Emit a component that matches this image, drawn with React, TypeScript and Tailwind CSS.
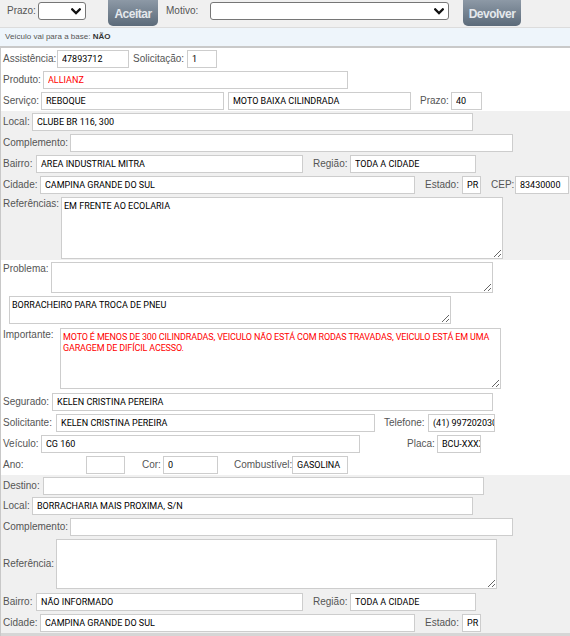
import type { ReactNode } from 'react';

interface BoxProps {
  value?: string;
  className?: string;
  red?: boolean;
}

function Label({ className = '', children }: { className?: string; children: ReactNode }) {
  return (
    <span
      className={`shrink-0 whitespace-nowrap font-['Liberation_Sans',sans-serif] text-[10px] leading-[12px] text-[#555] ${className}`}
    >
      {children}
    </span>
  );
}

function Field({ value = '', className = '', red = false }: BoxProps) {
  return (
    <input
      readOnly
      value={value}
      className={`h-[18px] shrink-0 border border-[#cdcdcd] bg-white pl-[4px] font-['Roboto',sans-serif] text-[9px] outline-none ${
        red ? 'text-[#ff0000]' : 'text-black'
      } ${className}`}
    />
  );
}

function Area({ value = '', className = '', red = false }: BoxProps) {
  return (
    <textarea
      readOnly
      wrap="off"
      value={value}
      className={`shrink-0 overflow-hidden border border-[#cdcdcd] bg-white px-[2px] pt-[3px] font-['Roboto',sans-serif] text-[9px] leading-[11px] outline-none ${
        red ? 'text-[#ff0000]' : 'text-black'
      } ${className}`}
    />
  );
}

// rows sit inside the 1px left border, so 2px padding puts labels at x=3
function Row({ className = '', children }: { className?: string; children: ReactNode }) {
  return <div className={`flex h-[18px] items-center pl-[2px] ${className}`}>{children}</div>;
}

function FakeSelect({ className = '' }: { className?: string }) {
  return (
    <div
      className={`flex h-[18px] shrink-0 items-center justify-end rounded-[3px] border border-[#767676] bg-white pr-[4px] ${className}`}
    >
      <svg width="10" height="7" viewBox="0 0 10 7" fill="none">
        <path d="M1.2 1.3 5 5.1 8.8 1.3" stroke="#111" strokeWidth="2.2" strokeLinecap="square" />
      </svg>
    </div>
  );
}

function ActionButton({ children, className = '' }: { children: ReactNode; className?: string }) {
  return (
    <button
      type="button"
      className={`h-[26px] shrink-0 rounded-b-[5px] bg-gradient-to-b from-[#8d99a6] to-[#5c6b7a] pt-[1px] text-center font-['Liberation_Sans_Narrow','Liberation_Sans',sans-serif] text-[12px] font-bold leading-[20px] tracking-[-0.5px] text-[#e4e8ec] ${className}`}
    >
      {children}
    </button>
  );
}

export default function App() {
  return (
    <div className="min-h-screen w-[570px] bg-white">
      {/* toolbar */}
      <div className="flex h-[28px] items-start border-b border-[#dcdcdc] bg-[#f0f0f0]">
        <Label className="ml-[7px] mt-[5px] w-[31px]">Prazo:</Label>
        <FakeSelect className="mt-[2px] w-[48px]" />
        <ActionButton className="ml-[22px] w-[50px]">Aceitar</ActionButton>
        <Label className="ml-[8px] mt-[5px] w-[44px]">Motivo:</Label>
        <FakeSelect className="mt-[2px] w-[239px]" />
        <ActionButton className="ml-[14px] w-[58px]">Devolver</ActionButton>
      </div>

      <div className="flex h-[20px] items-center border-b-2 border-[#c9c9c9] bg-[#eef5fb] pl-[5px] font-['Liberation_Sans',sans-serif] text-[8px] text-[#555]">
        Veículo vai para a base:&nbsp;<span className="font-bold text-[#333]">NÃO</span>
      </div>

      <div className="border-l border-[#c8c8c8]">
        {/* atendimento */}
        <div className="flex flex-col gap-[3px] bg-white pb-[1px] pt-[2px]">
          <Row>
            <Label className="w-[54px]">Assistência:</Label>
            <Field value="47893712" className="w-[72px]" />
            <Label className="ml-[4px] w-[54px]">Solicitação:</Label>
            <Field value="1" className="w-[30px]" />
          </Row>
          <Row>
            <Label className="w-[40px]">Produto:</Label>
            <Field value="ALLIANZ" red className="w-[305px]" />
          </Row>
          <Row>
            <Label className="w-[38px]">Serviço:</Label>
            <Field value="REBOQUE" className="w-[183px]" />
            <Field value="MOTO BAIXA CILINDRADA" className="ml-[4px] w-[183px]" />
            <Label className="ml-[9px] w-[31px]">Prazo:</Label>
            <Field value="40" className="w-[31px]" />
          </Row>
        </div>

        {/* origem */}
        <div className="flex flex-col gap-[3px] bg-[#f0f0f0] pb-[1px] pt-[2px]">
          <Row>
            <Label className="w-[29px]">Local:</Label>
            <Field value="CLUBE BR 116, 300" className="w-[441px]" />
          </Row>
          <Row>
            <Label className="w-[67px]">Complemento:</Label>
            <Field className="w-[443px]" />
          </Row>
          <Row>
            <Label className="w-[33px]">Bairro:</Label>
            <Field value="AREA INDUSTRIAL MITRA" className="w-[267px]" />
            <Label className="ml-[10px] w-[37px]">Região:</Label>
            <Field value="TODA A CIDADE" className="w-[126px]" />
          </Row>
          <Row>
            <Label className="w-[37px]">Cidade:</Label>
            <Field value="CAMPINA GRANDE DO SUL" className="w-[375px]" />
            <Label className="ml-[10px] w-[37px]">Estado:</Label>
            <Field value="PR" className="w-[19px] pl-[2px]" />
            <Label className="ml-[10px] w-[24px]">CEP:</Label>
            <Field value="83430000" className="w-[54px] pl-[3px]" />
          </Row>
          <div className="flex items-start pl-[2px]">
            <Label className="w-[58px] pt-[1px]">Referências:</Label>
            <Area value="EM FRENTE AO ECOLARIA" className="h-[62px] w-[442px]" />
          </div>
        </div>

        {/* ocorrência */}
        <div className="flex flex-col bg-white pb-[1px] pt-[2px]">
          <div className="flex items-start pl-[2px]">
            <Label className="w-[48px] pt-[1px]">Problema:</Label>
            <Area className="h-[31px] w-[442px]" />
          </div>
          <div className="mt-[3px] flex items-start pl-[8px]">
            <Area value="BORRACHEIRO PARA TROCA DE PNEU" className="h-[28px] w-[442px]" />
          </div>
          <div className="mt-[4px] flex items-start pl-[2px]">
            <Label className="w-[57px] pt-[1px]">Importante:</Label>
            <Area
              red
              value={
                'MOTO É MENOS DE 300 CILINDRADAS, VEICULO NÃO ESTÁ COM RODAS TRAVADAS, VEICULO ESTÁ EM UMA\nGARAGEM DE DIFÍCIL ACESSO.'
              }
              className="h-[61px] w-[441px] tracking-[-0.15px]"
            />
          </div>
          <Row className="mt-[4px]">
            <Label className="w-[49px]">Segurado:</Label>
            <Field value="KELEN CRISTINA PEREIRA" className="w-[441px]" />
          </Row>
          <Row className="mt-[3px]">
            <Label className="w-[53px]">Solicitante:</Label>
            <Field value="KELEN CRISTINA PEREIRA" className="w-[319px]" />
            <Label className="ml-[9px] w-[44px]">Telefone:</Label>
            <Field value="(41) 997202030" className="w-[67px] pl-[3px]" />
          </Row>
          <Row className="mt-[3px]">
            <Label className="w-[38px]">Veículo:</Label>
            <Field value="CG 160" className="w-[319px]" />
            <Label className="ml-[47px] w-[30px]">Placa:</Label>
            <Field value="BCU-XXXX" className="w-[44px] pl-[3px]" />
          </Row>
          <Row className="mt-[3px]">
            <Label className="w-[83px]">Ano:</Label>
            <Field className="w-[39px]" />
            <Label className="ml-[17px] w-[21px]">Cor:</Label>
            <Field value="0" className="w-[55px]" />
            <Label className="ml-[16px] w-[58px]">Combustível:</Label>
            <Field value="GASOLINA" className="w-[56px] pl-[3px]" />
          </Row>
        </div>

        {/* destino */}
        <div className="flex flex-col bg-[#f0f0f0] pb-[1px] pt-[2px]">
          <Row>
            <Label className="w-[40px]">Destino:</Label>
            <Field className="w-[441px]" />
          </Row>
          <Row className="mt-[2px]">
            <Label className="w-[29px]">Local:</Label>
            <Field value="BORRACHARIA MAIS PROXIMA, S/N" className="w-[441px]" />
          </Row>
          <Row className="mt-[3px]">
            <Label className="w-[67px]">Complemento:</Label>
            <Field className="w-[443px]" />
          </Row>
          <div className="mt-[3px] flex items-center pl-[2px]">
            <Label className="w-[53px]">Referência:</Label>
            <Area className="h-[50px] w-[441px]" />
          </div>
          <Row className="mt-[4px]">
            <Label className="w-[33px]">Bairro:</Label>
            <Field value="NÃO INFORMADO" className="w-[267px]" />
            <Label className="ml-[10px] w-[37px]">Região:</Label>
            <Field value="TODA A CIDADE" className="w-[126px]" />
          </Row>
          <Row className="mt-[3px]">
            <Label className="w-[37px]">Cidade:</Label>
            <Field value="CAMPINA GRANDE DO SUL" className="w-[375px]" />
            <Label className="ml-[10px] w-[37px]">Estado:</Label>
            <Field value="PR" className="w-[19px] pl-[2px]" />
          </Row>
        </div>

        <div className="h-[20px] bg-[#d6d6d6]" />
      </div>
    </div>
  );
}
